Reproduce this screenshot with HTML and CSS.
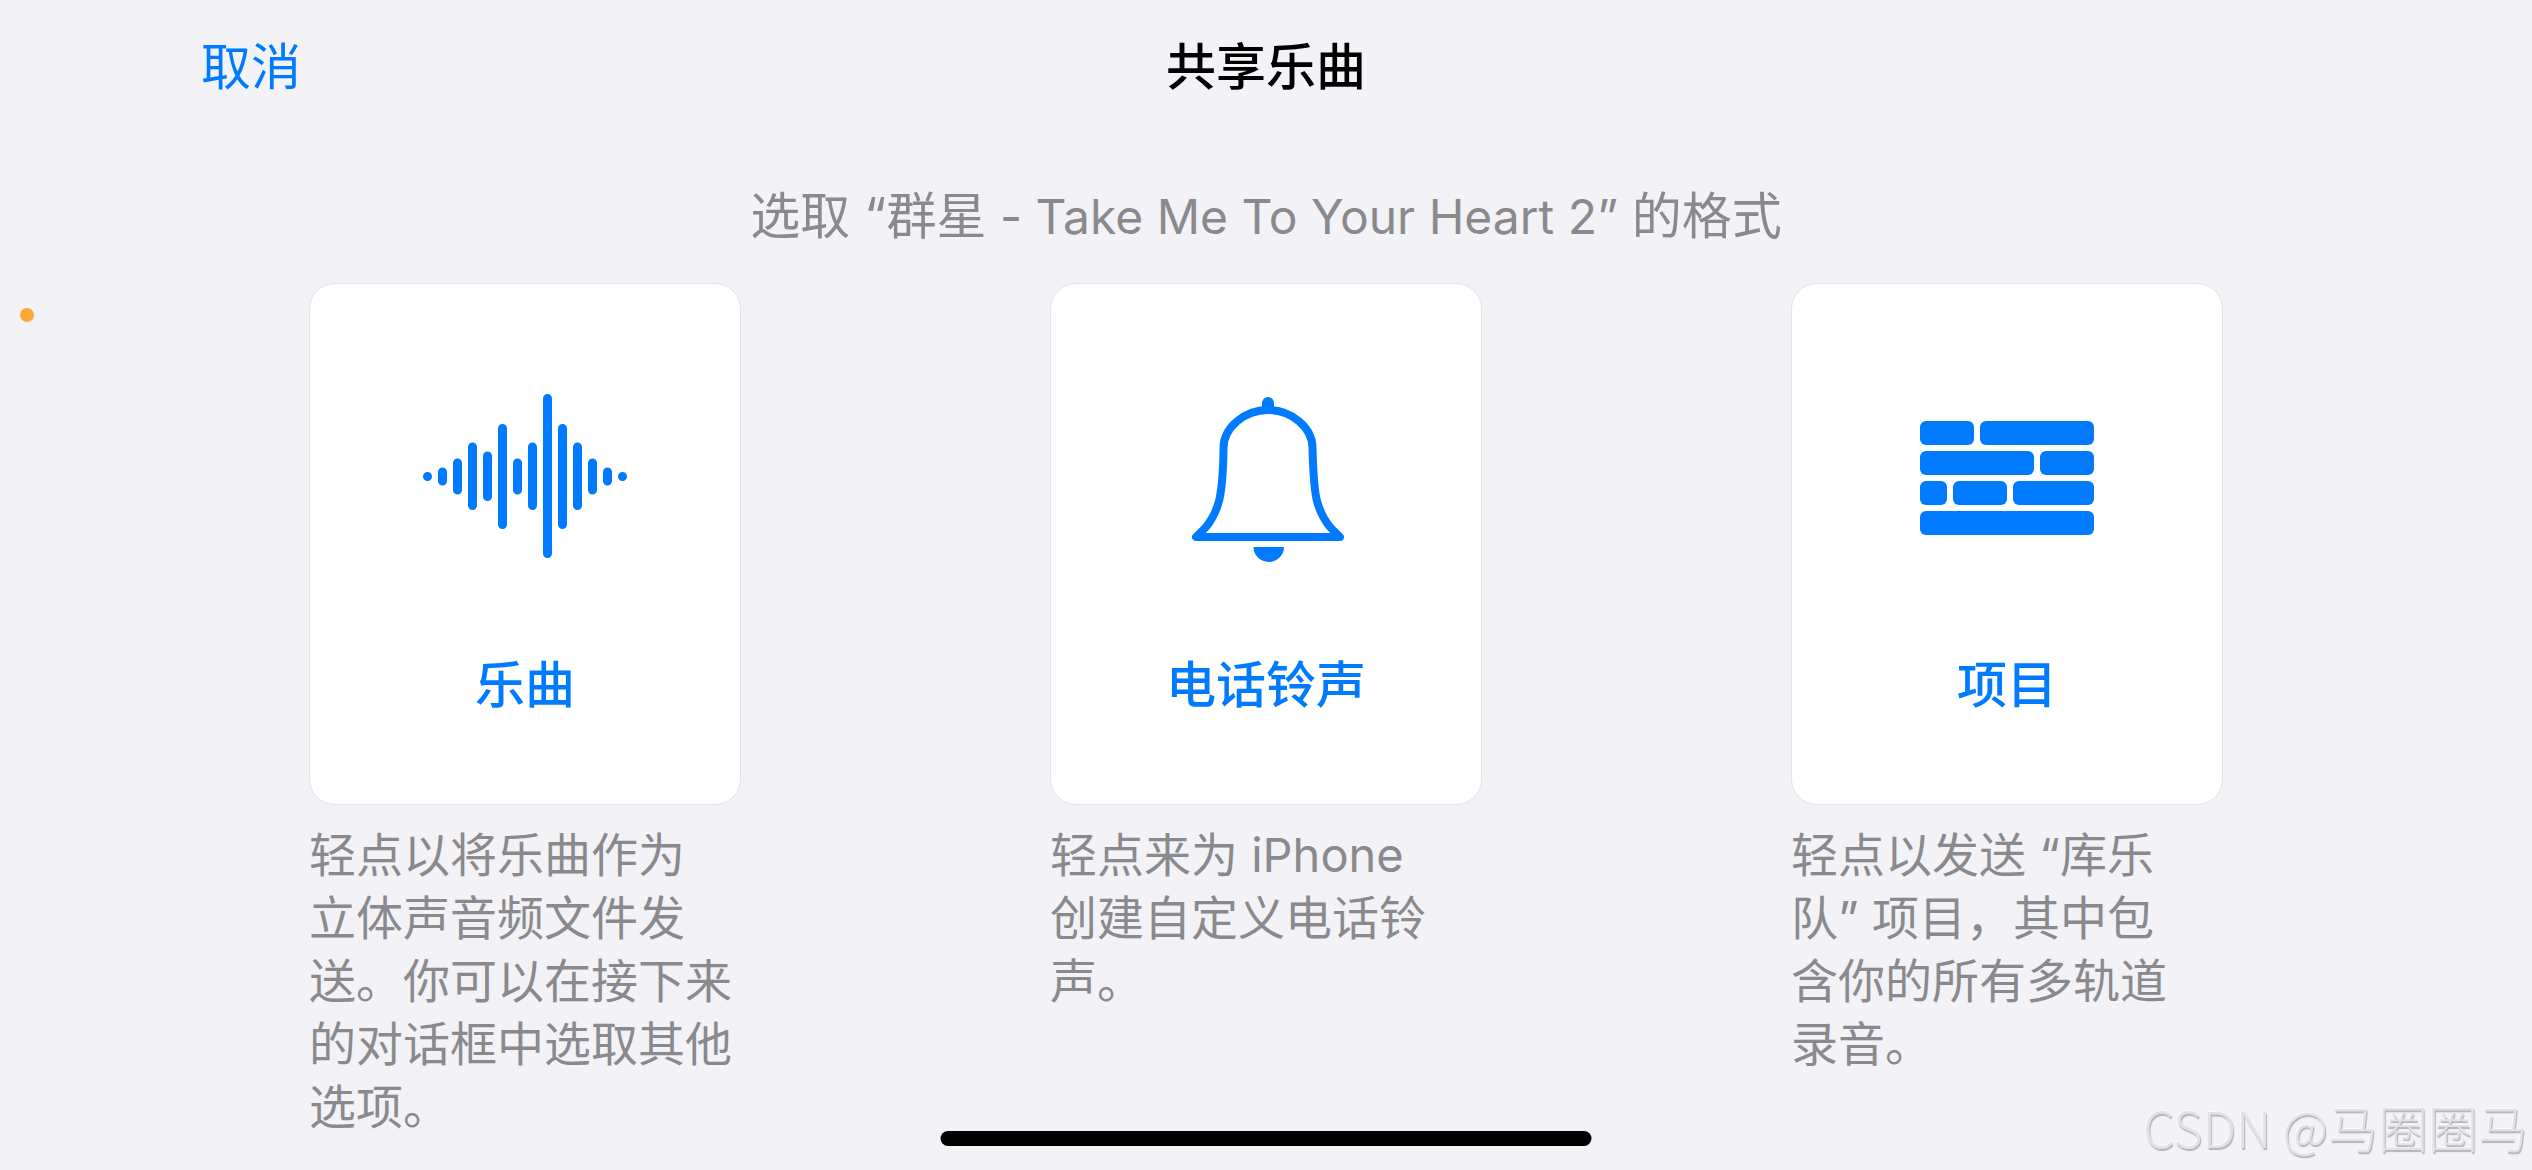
FILE: index.html
```html
<!DOCTYPE html>
<html lang="zh-CN">
<head>
    <meta charset="UTF-8">
    <meta name="viewport" content="width=device-width, initial-scale=1.0">
    <title>共享乐曲</title>
    <link rel="stylesheet" href="styles.css">
</head>
<body>
    <span class="status-dot"></span>

    <header class="nav-bar">
        <button type="button" class="cancel-btn">取消</button>
        <h1 class="nav-title">共享乐曲</h1>
    </header>

    <main class="content">
        <p class="subtitle">选取 “群星<span class="song-name"> - Take Me To Your Heart 2” </span>的格式</p>

        <div class="options">
            <div class="option">
                <button type="button" class="card" aria-describedby="song-desc">
                    <svg class="card-icon" viewBox="0 0 210 180" aria-hidden="true">
                        <g stroke="currentColor" stroke-width="9" stroke-linecap="round">
                            <path d="M7.500 89.400v.1M22.500 85v9M37.500 76v27M52.500 60v58.500M67.500 69v40.500M82.500 41.500v96M97.500 76v27M112.500 60v58.500M127.500 11.500v155M142.500 41.500v96M157.500 60v58.500M172.500 76v27M187.500 85v9M202.500 89.400v.1"/>
                        </g>
                    </svg>
                    <span class="card-label">乐曲</span>
                </button>
                <p class="option-desc" id="song-desc">轻点以将乐曲作为<br>立体声音频文件发<br>送。你可以在接下来<br>的对话框中选取其他<br>选项。</p>
            </div>

            <div class="option">
                <button type="button" class="card" aria-describedby="ringtone-desc">
                    <svg class="card-icon" viewBox="0 0 210 180" aria-hidden="true">
                        <path d="M107 23C83 23 62.500 41 62.500 61C62.300 80 61.500 98 58.500 112C55 127 47 139 41 144L35 150H179L173 144C167 139 159 127 155.500 112C152.500 98 152 80 151.500 61C151.500 41 131 23 107 23Z" fill="none" stroke="currentColor" stroke-width="8" stroke-linejoin="round"/>
                        <path d="M101 24v-8a6 6 0 0 1 12 0v8zM92.500 160h30.500a15.250 15 0 0 1-30.500 0z" fill="currentColor"/>
                    </svg>
                    <span class="card-label">电话铃声</span>
                </button>
                <p class="option-desc" id="ringtone-desc">轻点来为 iPhone<br>创建自定义电话铃<br>声。</p>
            </div>

            <div class="option">
                <button type="button" class="card" aria-describedby="project-desc">
                    <svg class="card-icon" viewBox="0 0 210 180" aria-hidden="true">
                        <g fill="currentColor">
                            <rect x="18" y="34" width="54" height="24" rx="6"/>
                            <rect x="78" y="34" width="114" height="24" rx="6"/>
                            <rect x="18" y="64" width="114" height="24" rx="6"/>
                            <rect x="138" y="64" width="54" height="24" rx="6"/>
                            <rect x="18" y="94" width="27" height="24" rx="6"/>
                            <rect x="51" y="94" width="54" height="24" rx="6"/>
                            <rect x="111" y="94" width="81" height="24" rx="6"/>
                            <rect x="18" y="124" width="174" height="24" rx="6"/>
                        </g>
                    </svg>
                    <span class="card-label">项目</span>
                </button>
                <p class="option-desc" id="project-desc">轻点以发送 “库乐<br>队” 项目，其中包<br>含你的所有多轨道<br>录音。</p>
            </div>
        </div>
    </main>

    <div class="home-indicator"></div>
    <div class="watermark">CSDN @马圈圈马</div>
</body>
</html>
```

FILE: styles.css
```css
* {
    margin: 0;
    padding: 0;
    box-sizing: border-box;
}

body {
    position: relative;
    min-height: 100vh;
    background-color: #F2F2F7;
    font-family: 'Inter', 'Noto Sans CJK SC', sans-serif;
    overflow: hidden;
}

button {
    font-family: inherit;
    color: #007AFF;
    cursor: pointer;
}

.status-dot {
    position: absolute;
    top: 308px;
    left: 20px;
    width: 14px;
    height: 14px;
    border-radius: 50%;
    background-color: #FFA733;
}

/* 顶部导航 */
.nav-bar {
    display: grid;
    grid-template-columns: 1fr auto 1fr;
    padding: 37px 201px 0;
}

.cancel-btn {
    justify-self: start;
    border: none;
    background: none;
    font-size: 50px;
    line-height: 60px;
}

.nav-title {
    font-size: 50px;
    font-weight: 500;
    line-height: 60px;
    color: #000000;
}

.content {
    padding: 89px 309px 0;
}

.subtitle {
    font-size: 50px;
    line-height: 60px;
    text-align: center;
    color: #8A8A8E;
    margin-bottom: 36px;
}

.song-name {
    font-size: 48px;
}

/* 格式选项 */
.options {
    display: flex;
    justify-content: space-between;
}

.option {
    width: 432px;
}

.card {
    display: flex;
    flex-direction: column;
    align-items: center;
    gap: 88px;
    width: 100%;
    padding: 103px 0 89px;
    border: 1px solid #E5E5E8;
    border-radius: 26px;
    background-color: #FFFFFF;
}

.card-icon {
    width: 210px;
    height: 180px;
}

.card-label {
    font-size: 50px;
    font-weight: 500;
    line-height: 60px;
}

.option-desc {
    margin-top: 18px;
    font-size: 47px;
    line-height: 63px;
    color: #8A8A8E;
    white-space: nowrap;
}

.home-indicator {
    position: absolute;
    left: 50%;
    bottom: 24px;
    width: 651px;
    height: 15px;
    border-radius: 8px;
    background-color: #000000;
    transform: translateX(-50%);
}

.watermark {
    position: absolute;
    right: 4px;
    bottom: 14px;
    font-family: 'Noto Sans CJK SC', sans-serif;
    font-size: 50px;
    font-weight: 300;
    line-height: 60px;
    color: #E2E2E4;
    text-shadow: 1px 2px 1px #B4B4B8, -1px -1px 1px #FAFAFC;
}
```
